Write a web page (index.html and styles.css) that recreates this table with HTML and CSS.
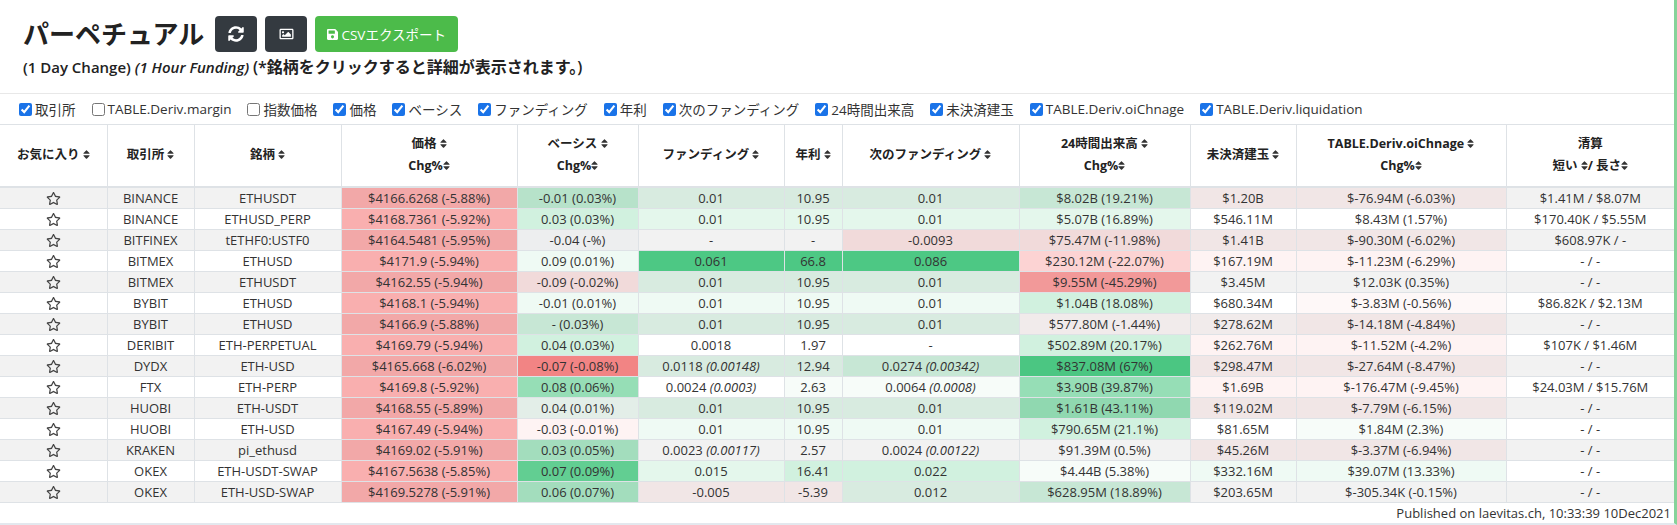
FILE: index.html
```html
<!DOCTYPE html>
<html lang="ja">
<head>
<meta charset="utf-8">
<title>パーペチュアル</title>
<link rel="stylesheet" href="styles.css">
</head>
<body>
<svg width="0" height="0" class="defs">
  <defs>
    <symbol id="sort" viewBox="0 0 320 512"><path d="M41 288h238c21.4 0 32.1 25.9 17 41L177 448c-9.4 9.4-24.6 9.4-33.9 0L24 329c-15.1-15.1-4.4-41 17-41zm255-105L177 64c-9.4-9.4-24.6-9.4-33.9 0L24 183c-15.1 15.1-4.4 41 17 41h238c21.4 0 32.1-25.9 17-41z"/></symbol>
    <symbol id="star" viewBox="0 0 576 512"><path d="M528.1 171.5L382 150.2 316.7 17.8c-11.7-23.6-45.6-23.9-57.4 0L194 150.2 47.9 171.5c-26.2 3.8-36.7 36.1-17.7 54.6l105.7 103-25 145.5c-4.5 26.3 23.2 46 46.4 33.7L288 439.6l130.7 68.7c23.2 12.2 50.9-7.4 46.4-33.7l-25-145.5 105.7-103c19-18.5 8.500-50.8-17.7-54.6zM388.6 312.3l23.7 138.4L288 385.4l-124.3 65.3 23.7-138.4-100.6-98 139-20.2 62.2-126 62.2 126 139 20.2-100.6 98z"/></symbol>
  </defs>
</svg>
<div class="page">
  <header class="top">
    <div class="title-row">
      <h1 class="title">パーペチュアル</h1>
      <button class="btn btn-dark" type="button" aria-label="refresh">
        <svg class="ico ico-sync" viewBox="0 0 512 512"><path d="M370.72 133.28C339.458 104.008 298.888 87.962 255.848 88c-77.458.068-144.328 53.178-162.791 126.85-1.344 5.363-6.122 9.150-11.651 9.150H24.103c-7.498 0-13.194-6.807-11.807-14.176C33.933 94.924 134.813 8 256 8c66.448 0 126.791 26.136 171.315 68.685L463.030 40.970C478.149 25.851 504 36.559 504 57.941V192c0 13.255-10.745 24-24 24H345.941c-21.382 0-32.090-25.851-16.971-40.971l41.750-41.749zM32 296h134.059c21.382 0 32.090 25.851 16.971 40.971l-41.750 41.750c31.262 29.273 71.835 45.319 114.876 45.280 77.418-.070 144.315-53.144 162.787-126.849 1.344-5.363 6.122-9.150 11.651-9.150h57.304c7.498 0 13.194 6.807 11.807 14.176C478.067 417.076 377.187 504 256 504c-66.448 0-126.791-26.136-171.315-68.685L48.970 471.030C33.851 486.149 8 475.441 8 454.059V320c0-13.255 10.745-24 24-24z"/></svg>
      </button>
      <button class="btn btn-dark" type="button" aria-label="image">
        <svg class="ico ico-img" viewBox="0 0 512 512"><path d="M464 64H48C21.49 64 0 85.49 0 112v288c0 26.51 21.49 48 48 48h416c26.51 0 48-21.49 48-48V112c0-26.51-21.49-48-48-48zm-6 336H54a6 6 0 0 1-6-6V118a6 6 0 0 1 6-6h404a6 6 0 0 1 6 6v276a6 6 0 0 1-6 6zM128 152c-22.091 0-40 17.909-40 40s17.909 40 40 40 40-17.909 40-40-17.909-40-40-40zM96 352h320v-80l-87.515-87.515c-4.686-4.686-12.284-4.686-16.971 0L192 304l-39.515-39.515c-4.686-4.686-12.284-4.686-16.971 0L96 304v48z"/></svg>
      </button>
      <button class="btn btn-green" type="button">
        <svg class="ico ico-save" viewBox="0 0 448 512"><path d="M433.941 129.941l-83.882-83.882A48 48 0 0 0 316.118 32H48C21.490 32 0 53.490 0 80v352c0 26.510 21.490 48 48 48h352c26.510 0 48-21.490 48-48V163.882a48 48 0 0 0-14.059-33.941zM224 416c-35.346 0-64-28.654-64-64 0-35.346 28.654-64 64-64s64 28.654 64 64c0 35.346-28.654 64-64 64zm96-304.520V212c0 6.627-5.373 12-12 12H76c-6.627 0-12-5.373-12-12V108c0-6.627 5.373-12 12-12h228.520c3.183 0 6.235 1.264 8.485 3.515l3.480 3.480A11.996 11.996 0 0 1 320 111.480z"/></svg>
        <span>CSVエクスポート</span>
      </button>
    </div>
    <p class="subtitle">(1 Day Change) <i>(1 Hour Funding)</i> <span class="jp">(*銘柄をクリックすると詳細が表示されます。)</span></p>
  </header>

  <div class="filters">
    <label class="cb"><input type="checkbox" checked>取引所</label>
    <label class="cb"><input type="checkbox">TABLE.Deriv.margin</label>
    <label class="cb"><input type="checkbox">指数価格</label>
    <label class="cb"><input type="checkbox" checked>価格</label>
    <label class="cb"><input type="checkbox" checked>ベーシス</label>
    <label class="cb"><input type="checkbox" checked>ファンディング</label>
    <label class="cb"><input type="checkbox" checked>年利</label>
    <label class="cb"><input type="checkbox" checked>次のファンディング</label>
    <label class="cb"><input type="checkbox" checked>24時間出来高</label>
    <label class="cb"><input type="checkbox" checked>未決済建玉</label>
    <label class="cb"><input type="checkbox" checked>TABLE.Deriv.oiChnage</label>
    <label class="cb"><input type="checkbox" checked>TABLE.Deriv.liquidation</label>
  </div>

  <table class="grid">
    <colgroup>
      <col class="c-fav"><col class="c-ex"><col class="c-sym"><col class="c-price"><col class="c-basis"><col class="c-fund"><col class="c-apr"><col class="c-next"><col class="c-vol"><col class="c-oi"><col class="c-oic"><col class="c-liq">
    </colgroup>
    <thead>
      <tr>
        <th>お気に入り <svg class="s"><use href="#sort"/></svg></th>
        <th>取引所 <svg class="s"><use href="#sort"/></svg></th>
        <th>銘柄 <svg class="s"><use href="#sort"/></svg></th>
        <th><div>価格 <svg class="s"><use href="#sort"/></svg></div><div>Chg%<svg class="s"><use href="#sort"/></svg></div></th>
        <th><div>ベーシス <svg class="s"><use href="#sort"/></svg></div><div>Chg%<svg class="s"><use href="#sort"/></svg></div></th>
        <th>ファンディング <svg class="s"><use href="#sort"/></svg></th>
        <th>年利 <svg class="s"><use href="#sort"/></svg></th>
        <th>次のファンディング <svg class="s"><use href="#sort"/></svg></th>
        <th><div>24時間出来高 <svg class="s"><use href="#sort"/></svg></div><div>Chg%<svg class="s"><use href="#sort"/></svg></div></th>
        <th>未決済建玉 <svg class="s"><use href="#sort"/></svg></th>
        <th><div>TABLE.Deriv.oiChnage <svg class="s"><use href="#sort"/></svg></div><div>Chg%<svg class="s"><use href="#sort"/></svg></div></th>
        <th><div>清算</div><div>短い <svg class="s"><use href="#sort"/></svg>/ 長さ<svg class="s"><use href="#sort"/></svg></div></th>
      </tr>
    </thead>
    <tbody>
      <tr>
        <td><svg class="star"><use href="#star"/></svg></td><td>BINANCE</td><td>ETHUSDT</td>
        <td class="rp">$4166.6268 (-5.88%)</td><td class="g4">-0.01 (0.03%)</td><td class="g2">0.01</td><td class="g2">10.95</td><td class="g2">0.01</td>
        <td class="g3">$8.02B (19.21%)</td><td class="r1">$1.20B</td><td class="r1">$-76.94M (-6.03%)</td><td>$1.41M / $8.07M</td>
      </tr>
      <tr>
        <td><svg class="star"><use href="#star"/></svg></td><td>BINANCE</td><td>ETHUSD_PERP</td>
        <td class="rp">$4168.7361 (-5.92%)</td><td class="g3">0.03 (0.03%)</td><td class="g2">0.01</td><td class="g2">10.95</td><td class="g2">0.01</td>
        <td class="g2">$5.07B (16.89%)</td><td>$546.11M</td><td>$8.43M (1.57%)</td><td>$170.40K / $5.55M</td>
      </tr>
      <tr>
        <td><svg class="star"><use href="#star"/></svg></td><td>BITFINEX</td><td>tETHF0:USTF0</td>
        <td class="rp">$4164.5481 (-5.95%)</td><td class="n1">-0.04 (-%)</td><td>-</td><td>-</td><td class="r2">-0.0093</td>
        <td class="r2">$75.47M (-11.98%)</td><td class="r1">$1.41B</td><td class="r1">$-90.30M (-6.02%)</td><td>$608.97K / -</td>
      </tr>
      <tr>
        <td><svg class="star"><use href="#star"/></svg></td><td>BITMEX</td><td>ETHUSD</td>
        <td class="rp">$4171.9 (-5.94%)</td><td class="g1">0.09 (0.01%)</td><td class="g9">0.061</td><td class="g9">66.8</td><td class="g9">0.086</td>
        <td class="r3">$230.12M (-22.07%)</td><td class="r1">$167.19M</td><td class="r1">$-11.23M (-6.29%)</td><td>- / -</td>
      </tr>
      <tr>
        <td><svg class="star"><use href="#star"/></svg></td><td>BITMEX</td><td>ETHUSDT</td>
        <td class="rp">$4162.55 (-5.94%)</td><td class="r2">-0.09 (-0.02%)</td><td class="g2">0.01</td><td class="g2">10.95</td><td class="g2">0.01</td>
        <td class="r6">$9.55M (-45.29%)</td><td>$3.45M</td><td>$12.03K (0.35%)</td><td>- / -</td>
      </tr>
      <tr>
        <td><svg class="star"><use href="#star"/></svg></td><td>BYBIT</td><td>ETHUSD</td>
        <td class="rp">$4168.1 (-5.94%)</td><td class="g1">-0.01 (0.01%)</td><td class="g1">0.01</td><td class="g1">10.95</td><td class="g1">0.01</td>
        <td class="g3">$1.04B (18.08%)</td><td>$680.34M</td><td class="r0">$-3.83M (-0.56%)</td><td>$86.82K / $2.13M</td>
      </tr>
      <tr>
        <td><svg class="star"><use href="#star"/></svg></td><td>BYBIT</td><td>ETHUSD</td>
        <td class="rp">$4166.9 (-5.88%)</td><td class="g3">- (0.03%)</td><td class="g2">0.01</td><td class="g2">10.95</td><td class="g2">0.01</td>
        <td class="r0">$577.80M (-1.44%)</td><td class="r0">$278.62M</td><td class="r1">$-14.18M (-4.84%)</td><td>- / -</td>
      </tr>
      <tr>
        <td><svg class="star"><use href="#star"/></svg></td><td>DERIBIT</td><td>ETH-PERPETUAL</td>
        <td class="rp">$4169.79 (-5.94%)</td><td class="g3">0.04 (0.03%)</td><td>0.0018</td><td>1.97</td><td>-</td>
        <td class="g3">$502.89M (20.17%)</td><td class="r1">$262.76M</td><td class="r1">$-11.52M (-4.2%)</td><td>$107K / $1.46M</td>
      </tr>
      <tr>
        <td><svg class="star"><use href="#star"/></svg></td><td>DYDX</td><td>ETH-USD</td>
        <td class="rp">$4165.668 (-6.02%)</td><td class="r8">-0.07 (-0.08%)</td><td class="g2">0.0118 <i>(0.00148)</i></td><td class="g2">12.94</td><td class="g3">0.0274 <i>(0.00342)</i></td>
        <td class="g9">$837.08M (67%)</td><td class="r1">$298.47M</td><td class="r1">$-27.64M (-8.47%)</td><td>- / -</td>
      </tr>
      <tr>
        <td><svg class="star"><use href="#star"/></svg></td><td>FTX</td><td>ETH-PERP</td>
        <td class="rp">$4169.8 (-5.92%)</td><td class="g6">0.08 (0.06%)</td><td>0.0024 <i>(0.0003)</i></td><td class="g0">2.63</td><td class="g0">0.0064 <i>(0.0008)</i></td>
        <td class="g6">$3.90B (39.87%)</td><td class="r1">$1.69B</td><td class="r1">$-176.47M (-9.45%)</td><td>$24.03M / $15.76M</td>
      </tr>
      <tr>
        <td><svg class="star"><use href="#star"/></svg></td><td>HUOBI</td><td>ETH-USDT</td>
        <td class="rp">$4168.55 (-5.89%)</td><td class="g1">0.04 (0.01%)</td><td class="g2">0.01</td><td class="g2">10.95</td><td class="g2">0.01</td>
        <td class="g6">$1.61B (43.11%)</td><td class="r1">$119.02M</td><td class="r1">$-7.79M (-6.15%)</td><td>- / -</td>
      </tr>
      <tr>
        <td><svg class="star"><use href="#star"/></svg></td><td>HUOBI</td><td>ETH-USD</td>
        <td class="rp">$4167.49 (-5.94%)</td><td class="r1">-0.03 (-0.01%)</td><td class="g1">0.01</td><td class="g1">10.95</td><td class="g1">0.01</td>
        <td class="g3">$790.65M (21.1%)</td><td>$81.65M</td><td class="g0">$1.84M (2.3%)</td><td>- / -</td>
      </tr>
      <tr>
        <td><svg class="star"><use href="#star"/></svg></td><td>KRAKEN</td><td>pi_ethusd</td>
        <td class="rp">$4169.02 (-5.91%)</td><td class="g5">0.03 (0.05%)</td><td>0.0023 <i>(0.00117)</i></td><td>2.57</td><td>0.0024 <i>(0.00122)</i></td>
        <td>$91.39M (0.5%)</td><td class="r1">$45.26M</td><td class="r1">$-3.37M (-6.94%)</td><td>- / -</td>
      </tr>
      <tr>
        <td><svg class="star"><use href="#star"/></svg></td><td>OKEX</td><td>ETH-USDT-SWAP</td>
        <td class="rp">$4167.5638 (-5.85%)</td><td class="g8">0.07 (0.09%)</td><td class="g2">0.015</td><td class="g3">16.41</td><td class="g3">0.022</td>
        <td class="g0">$4.44B (5.38%)</td><td class="g1">$332.16M</td><td class="g1">$39.07M (13.33%)</td><td>- / -</td>
      </tr>
      <tr>
        <td><svg class="star"><use href="#star"/></svg></td><td>OKEX</td><td>ETH-USD-SWAP</td>
        <td class="rp">$4169.5278 (-5.91%)</td><td class="g5">0.06 (0.07%)</td><td class="r1">-0.005</td><td class="r1">-5.39</td><td class="g2">0.012</td>
        <td class="g3">$628.95M (18.89%)</td><td>$203.65M</td><td>$-305.34K (-0.15%)</td><td>- / -</td>
      </tr>
    </tbody>
    <tfoot>
      <tr><td colspan="12" class="foot">Published on laevitas.ch, 10:33:39 10Dec2021</td></tr>
    </tfoot>
  </table>
</div>
</body>
</html>
```
FILE: styles.css
```css
* { box-sizing: border-box; }
html, body { margin: 0; padding: 0; background: #fff; }
body {
  font-family: "Open Sans", "Noto Sans CJK JP", sans-serif;
  color: #333;
  font-size: 13px;
}
.defs { position: absolute; width: 0; height: 0; overflow: hidden; }

.page {
  width: 1677px;
  height: 525px;
  border-right: 3px solid #86d39a;
  border-bottom: 2px solid #e3e8ee;
  overflow: hidden;
}

.top { padding: 16px 0 0 23px; height: 94px; border-bottom: 1px solid #e8e8e8; }
.title-row { display: flex; align-items: center; height: 36px; gap: 8px; }
.title {
  margin: 0 3px 0 0;
  font-size: 26px;
  font-weight: 700;
  color: #222;
  font-family: "Open Sans", "Noto Sans CJK JP", sans-serif;
  line-height: 36px;
}
.btn {
  height: 36px;
  border: 0;
  border-radius: 4px;
  display: inline-flex;
  align-items: center;
  justify-content: center;
  padding: 0;
  color: #fff;
  font-family: "Open Sans", "Noto Sans CJK JP", sans-serif;
}
.btn-dark { width: 42px; background: #343a40; }
.btn-green { width: 143px; background: #4cbb4a; font-size: 13.5px; gap: 3px; }
.ico { fill: #fff; }
.ico-sync { width: 16px; height: 16px; }
.ico-img { width: 15px; height: 14px; }
.ico-save { width: 11px; height: 13px; }

.subtitle {
  margin: 5px 0 0 0;
  font-size: 15px;
  line-height: 20px;
  font-weight: 600;
  color: #222;
  white-space: nowrap;
}
.subtitle i { font-weight: 600; }
.subtitle .jp { font-size: 16px; }

.filters {
  height: 30px;
  display: flex;
  align-items: center;
  padding-left: 19px;
  gap: 16px;
  font-size: 13.5px;
  color: #333;
}
.cb { display: inline-flex; align-items: center; gap: 3px; white-space: nowrap; }
.cb input { margin: 0; width: 13px; height: 13px; accent-color: #1a73e8; }

.grid {
  width: 1674px;
  border-collapse: collapse;
  table-layout: fixed;
  border-top: 1px solid #dee2e6;
}
.c-fav { width: 107px; } .c-ex { width: 87px; } .c-sym { width: 147px; } .c-price { width: 176px; }
.c-basis { width: 121px; } .c-fund { width: 146px; } .c-apr { width: 58px; } .c-next { width: 177px; }
.c-vol { width: 171px; } .c-oi { width: 106px; } .c-oic { width: 210px; } .c-liq { width: 168px; }

.grid th {
  height: 62px;
  font-weight: 700;
  font-size: 12.5px;
  line-height: 22px;
  color: #222;
  text-align: center;
  vertical-align: middle;
  border-left: 1px solid #dee2e6;
  border-bottom: 2px solid #dee2e6;
  padding: 0 4px;
  white-space: nowrap;
}
.grid th:first-child, .grid td:first-child { border-left: 0; }
.s { width: 7px; height: 11px; fill: #333; vertical-align: -1px; }

.grid td {
  height: 21px;
  padding: 0 4px;
  line-height: 20px;
  text-align: center;
  border-left: 1px solid #dee2e6;
  border-top: 1px solid #dee2e6;
  white-space: nowrap;
  overflow: hidden;
  font-size: 13px;
  color: #333;
}
.grid tbody tr:first-child td { border-top: 0; }
.grid tbody tr:nth-child(odd) { background: #f2f2f2; }
.star { width: 15px; height: 13px; fill: #444; vertical-align: -2px; }

.rp { background: rgba(242, 80, 80, 0.46); }
.g0 { background: rgba(46, 190, 110, 0.04); }
.g1 { background: rgba(46, 190, 110, 0.08); }
.g2 { background: rgba(46, 190, 110, 0.13); }
.g3 { background: rgba(46, 190, 110, 0.22); }
.g4 { background: rgba(46, 190, 110, 0.30); }
.g5 { background: rgba(46, 190, 110, 0.40); }
.g6 { background: rgba(46, 190, 110, 0.50); }
.g8 { background: rgba(46, 190, 110, 0.75); }
.g9 { background: rgba(46, 190, 110, 0.85); }
.n1 { background: rgba(200, 205, 220, 0.10); }
.r0 { background: rgba(242, 80, 80, 0.04); }
.r1 { background: rgba(242, 80, 80, 0.07); }
.r2 { background: rgba(242, 80, 80, 0.14); }
.r3 { background: rgba(242, 80, 80, 0.25); }
.r6 { background: rgba(242, 80, 80, 0.55); }
.r8 { background: rgba(242, 80, 80, 0.68); }

.grid td.foot {
  height: 21px;
  line-height: 20px;
  text-align: right;
  padding: 0 3px 0 0;
  font-size: 13px;
  color: #333;
  border-left: 0;
}
```
